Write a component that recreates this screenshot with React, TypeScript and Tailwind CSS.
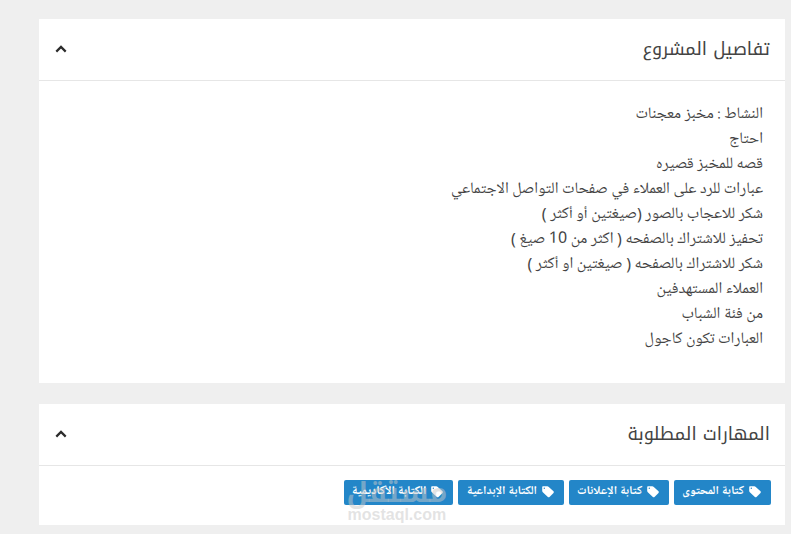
import { useState, type ReactNode } from 'react';

const details = [
  'النشاط : مخبز معجنات',
  'احتاج',
  'قصه للمخبز قصيره',
  'عبارات للرد على العملاء في صفحات التواصل الاجتماعي',
  'شكر للاعجاب بالصور (صيغتين أو أكثر )',
  'تحفيز للاشتراك بالصفحه ( اكثر من 10 صيغ )',
  'شكر للاشتراك بالصفحه ( صيغتين او أكثر )',
  'العملاء المستهدفين',
  'من فئة الشباب',
  'العبارات تكون كاجول',
];

const skills = ['كتابة المحتوى', 'كتابة الإعلانات', 'الكتابة الإبداعية', 'الكتابة الأكاديمية'];

function TagIcon() {
  return (
    <svg viewBox="0 0 12 12" className="w-3 h-3 shrink-0" fill="currentColor" aria-hidden="true">
      <path
        fillRule="evenodd"
        d="M.2 1.2C.2.6.6.2 1.2.2h4.2c.4 0 .8.2 1.1.5l5 4.6c.5.5.5 1.1 0 1.6l-4 4c-.5.5-1.1.5-1.6 0L.8 6.2C.4 5.9.2 5.5.2 5.1ZM2.3 1.6a.7.7 0 1 0 0 1.4.7.7 0 0 0 0-1.4Z"
      />
    </svg>
  );
}

function Panel({ title, children }: { title: string; children: ReactNode }) {
  const [open, setOpen] = useState(true);

  return (
    <section className="bg-white">
      <header className="h-[62px] flex items-center justify-between pb-[2px] px-[15px] border-b border-[#e6e6e6]">
        <h2 className="text-lg leading-7 text-[#444]">{title}</h2>
        <button
          type="button"
          aria-label={title}
          aria-expanded={open}
          onClick={() => setOpen(!open)}
          className="p-px text-[#2b2b2b]"
        >
          <svg viewBox="0 0 12 12" className={open ? 'w-3 h-3' : 'w-3 h-3 rotate-180'} fill="none" aria-hidden="true">
            <path d="M1.3 8.6 6 3.9l4.7 4.7" stroke="currentColor" strokeWidth="2.2" />
          </svg>
        </button>
      </header>
      {open && children}
    </section>
  );
}

export default function App() {
  return (
    <main
      dir="rtl"
      className="min-h-screen bg-[#efefef] pt-[19px] pr-[6px] pl-[39px] flex flex-col gap-[21px] font-['Noto_Kufi_Arabic','DejaVu_Sans',sans-serif]"
    >
      <Panel title="تفاصيل المشروع">
        <div className="pt-[21px] pb-[31px] px-[22px] text-base leading-[25px] text-[#444] font-['Noto_Naskh_Arabic_UI','Noto_Sans',sans-serif]">
          {details.map((line) => (
            <p key={line}>{line}</p>
          ))}
        </div>
      </Panel>

      <Panel title="المهارات المطلوبة">
        <ul className="pt-[14px] pb-5 px-[14px] flex flex-wrap gap-[5px]">
          {skills.map((skill, i) => (
            <li key={skill} className="relative">
              <a
                href="#"
                className="h-[25px] pr-[10px] pl-2 pb-px flex items-center gap-[5px] rounded-xs bg-[#2386c8] text-white text-xs font-bold font-['Noto_Naskh_Arabic_UI','Noto_Sans',sans-serif]"
              >
                <TagIcon />
                {skill}
              </a>
              {i === skills.length - 1 && (
                <div className="absolute top-0 left-[3px] pointer-events-none text-center text-[#c8c8c8]/50" aria-hidden="true">
                  <div className="h-[26px] text-[28px] leading-[26px] font-bold">مستقل</div>
                  <div dir="ltr" className="font-['Liberation_Sans',sans-serif] text-base leading-[18px] font-bold">
                    mostaql.com
                  </div>
                </div>
              )}
            </li>
          ))}
        </ul>
      </Panel>
    </main>
  );
}
